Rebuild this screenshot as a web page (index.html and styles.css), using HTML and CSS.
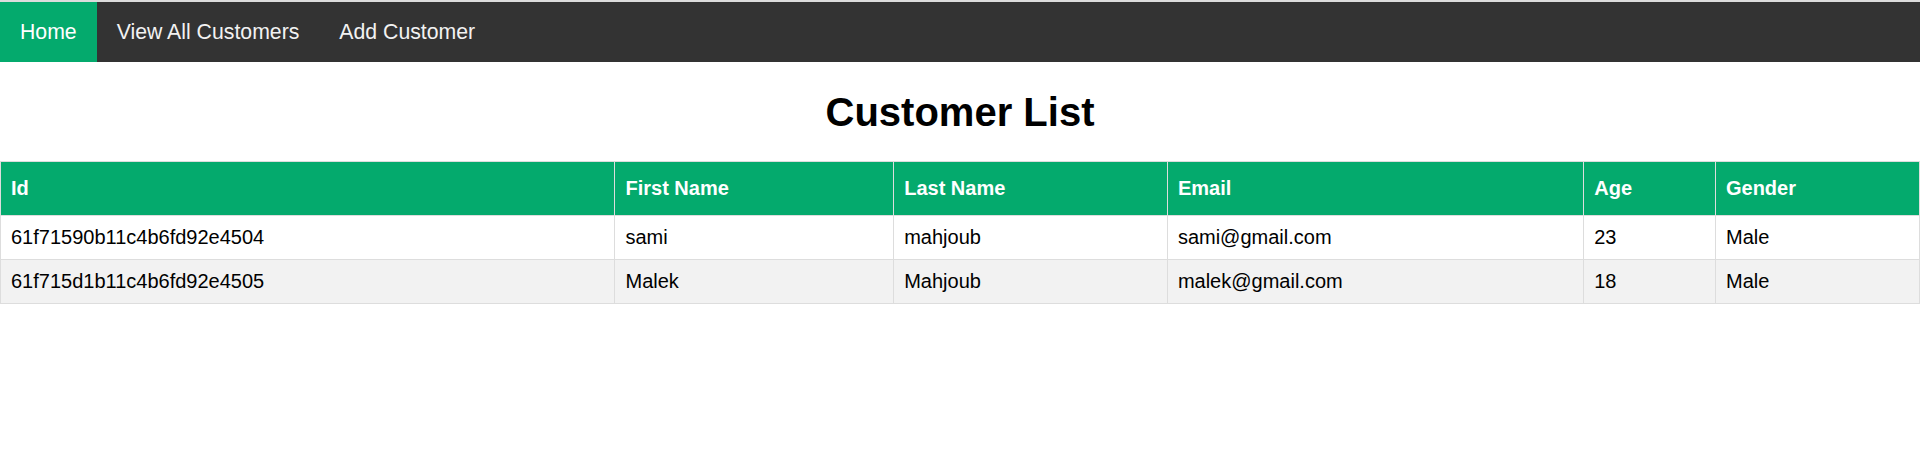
FILE: index.html
```html
<!DOCTYPE html>
<html>
<head>
<meta charset="utf-8">
<title>Customer List</title>
<link rel="stylesheet" href="styles.css">
</head>
<body>
<div class="topline"></div>
<nav class="topnav">
  <a class="active" href="#">Home</a>
  <a href="#">View All Customers</a>
  <a href="#">Add Customer</a>
</nav>
<h1 class="title">Customer List</h1>
<table class="customers">
  <thead>
    <tr><th>Id</th><th>First Name</th><th>Last Name</th><th>Email</th><th>Age</th><th>Gender</th></tr>
  </thead>
  <tbody>
    <tr><td>61f71590b11c4b6fd92e4504</td><td>sami</td><td>mahjoub</td><td>sami@gmail.com</td><td>23</td><td>Male</td></tr>
    <tr><td>61f715d1b11c4b6fd92e4505</td><td>Malek</td><td>Mahjoub</td><td>malek@gmail.com</td><td>18</td><td>Male</td></tr>
  </tbody>
</table>
</body>
</html>
```
FILE: styles.css
```css
html, body {
  margin: 0;
  padding: 0;
  background: #fff;
  font-family: "Liberation Sans", Arial, sans-serif;
}
.topline {
  height: 2px;
  background: #dcdcdc;
}
.topnav {
  display: flex;
  background: #333;
  height: 60px;
}
.topnav a {
  display: block;
  color: #f2f2f2;
  text-decoration: none;
  font-size: 21.25px;
  line-height: 24px;
  padding: 18px 20px;
}
.topnav a.active {
  background: #04AA6D;
  color: #fff;
}
.title {
  text-align: center;
  font-size: 40px;
  font-weight: bold;
  margin: 27px 0 26px;
  line-height: 46px;
  color: #000;
}
.customers {
  border-collapse: collapse;
  width: 100%;
  font-size: 20px;
}
.customers td, .customers th {
  border: 1px solid #ddd;
  padding: 10px;
  line-height: 23px;
  text-align: left;
}
.customers th {
  padding-top: 15px;
  padding-bottom: 15px;
  background: #04AA6D;
  color: #fff;
  font-weight: bold;
}
.customers tbody tr:nth-child(even) {
  background: #f2f2f2;
}
```
